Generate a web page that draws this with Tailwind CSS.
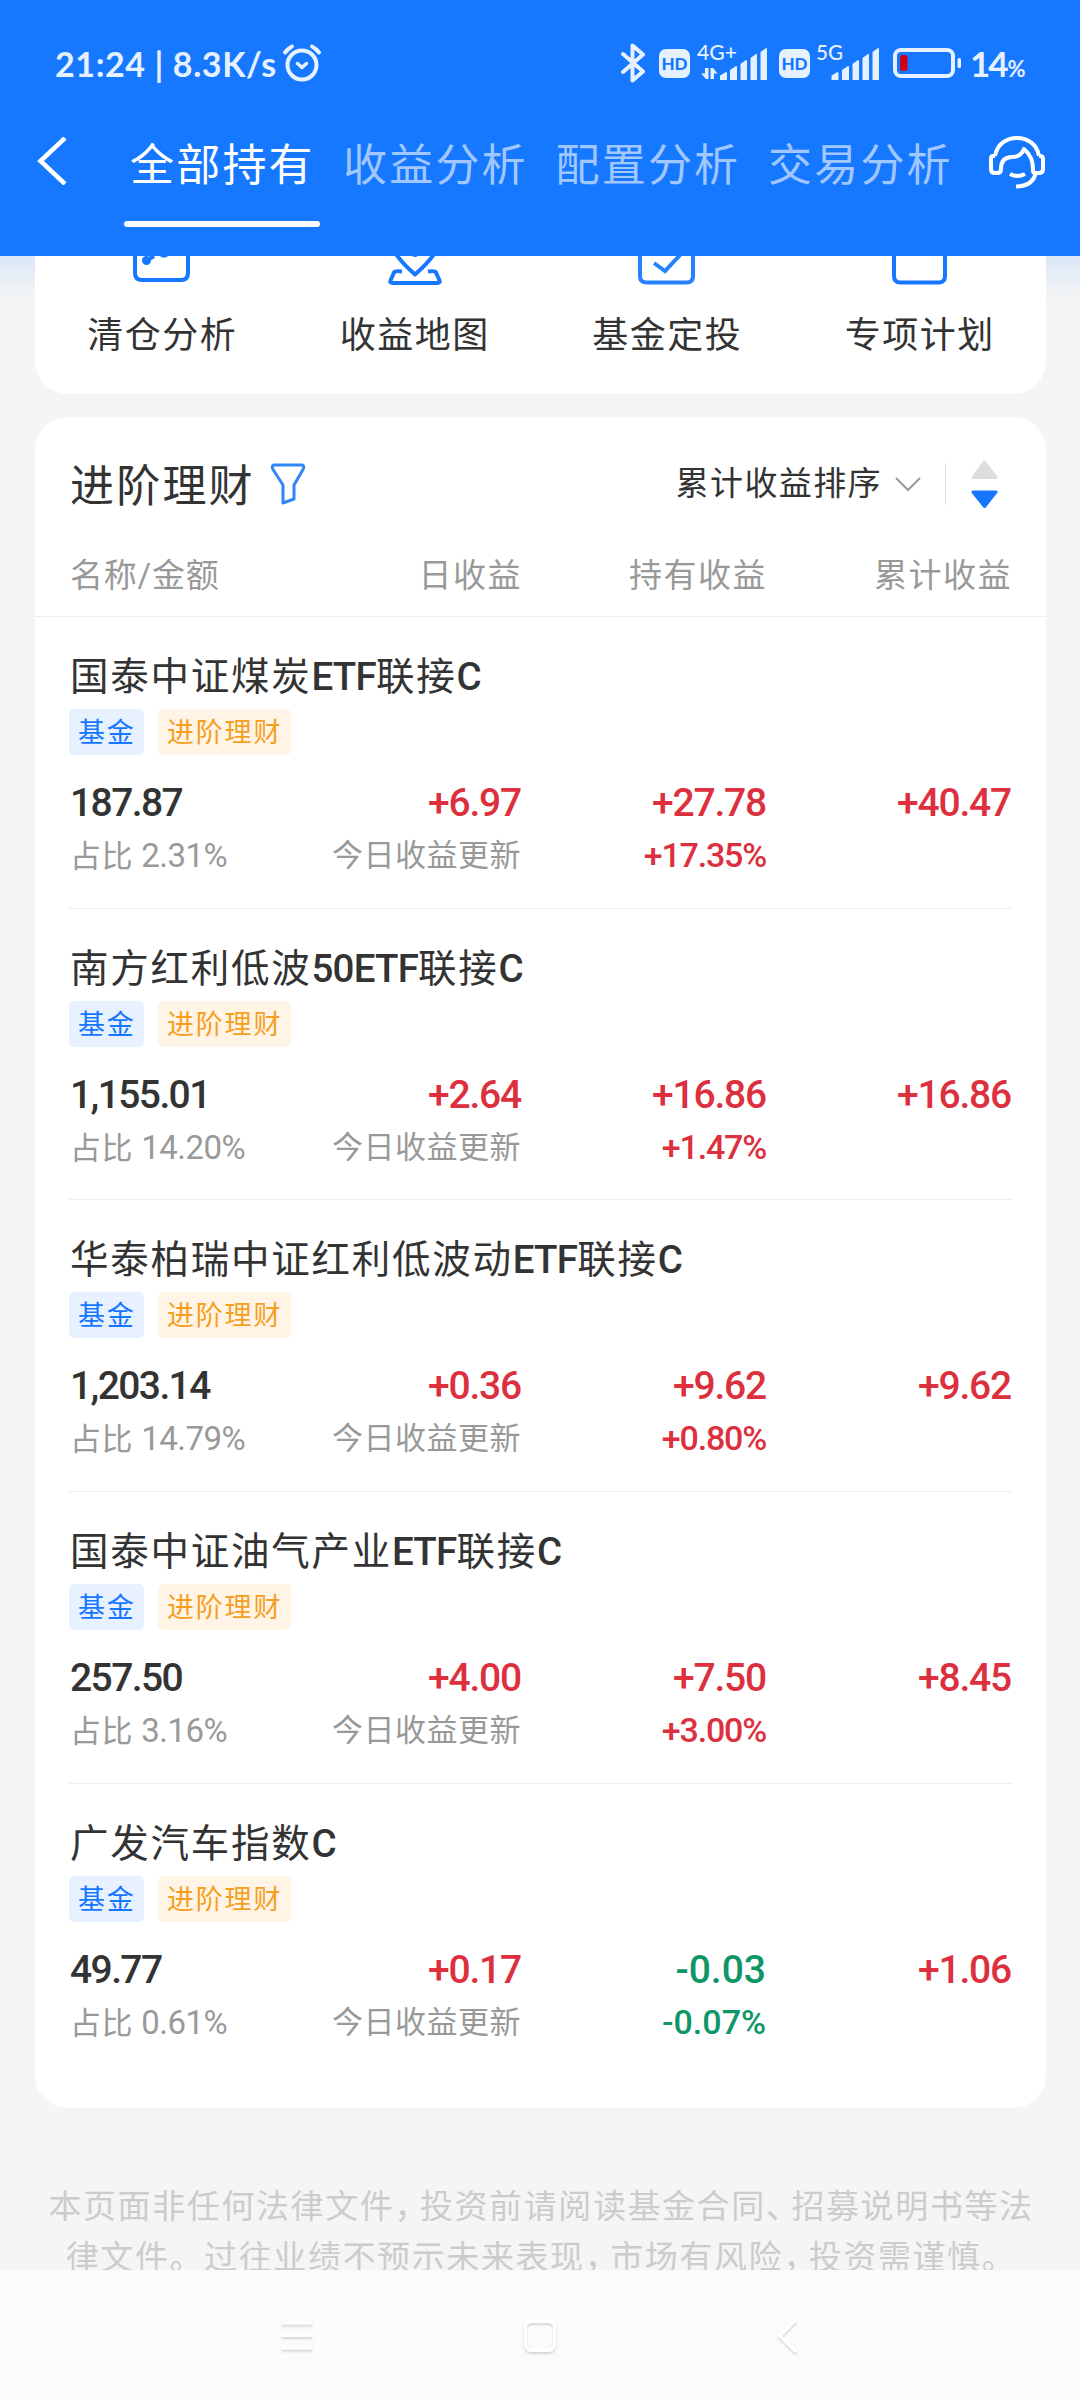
<!doctype html>
<html lang="zh-CN">
  <head>
    <meta charset="UTF-8" />
    <meta name="viewport" content="width=device-width, initial-scale=1.0" />
    <title>全部持有</title>
    <script src="https://cdn.jsdelivr.net/npm/@tailwindcss/browser@4"></script>
  </head>
  <body
    class="flex h-[2400px] w-[1080px] flex-col overflow-hidden bg-[#f5f5f5] font-['Roboto','Noto_Sans_CJK_SC',sans-serif] text-[#333]"
  >
    <header class="h-[256px] shrink-0 bg-[#1677ff] text-white">
      <!-- status bar -->
      <div class="flex h-[126px] items-center pl-[55px] text-[#e6f1ff]">
        <span
          class="w-[226px] whitespace-pre font-['Lato'] text-[34px] font-bold tracking-[0.6px]"
          >21:24 | 8.3K/s</span
        >
        <svg class="h-[40px] w-[42px]" viewBox="0 0 42 40" fill="none" stroke="currentColor" stroke-width="4" stroke-linecap="round">
          <circle cx="21" cy="22" r="14.5" />
          <path d="M4 9.5 Q7 5.5 11 3.5M38 9.5 Q35 5.5 31 3.5" />
          <path d="M16.5 20.5l4.5 4 4.500-4" stroke-width="3.500" stroke-linejoin="round" />
        </svg>
        <svg class="ml-[297px] h-[40px] w-[26px]" viewBox="0 0 26 40" fill="none" stroke="currentColor" stroke-width="4" stroke-linecap="round" stroke-linejoin="round">
          <path d="M3 11l20 17.500-10.500 9V2.500l10.500 9L3 29" />
        </svg>
        <span
          class="ml-[13px] flex h-[29px] w-[31px] items-center justify-center rounded-[7px] bg-[#e6f1ff] font-['Lato'] text-[17px] font-black leading-none text-[#1677ff]"
          >HD</span
        >
        <svg class="ml-[7px] h-[40px] w-[72px] overflow-visible" viewBox="0 0 72 40" fill="currentColor">
          <text x="0" y="17" font-family="Lato" font-size="21" font-weight="500" textLength="40" lengthAdjust="spacingAndGlyphs">4G+</text>
          <path d="M8 25h3.500v11H9l-5-5.500h4zM13.500 25h2.500l4.500 5.500H17V36h-3.500z" />
          <path d="M23 32.500l6-3.500q1 0 1 1v7H23zM33 27l6-4q1 0 1 1v13H33zM43.500 21l5.500-4q1 0 1 1v19H43.500zM53.500 15l5.500-4q1 0 1 1v25H53.500zM63.500 9l5.500-4q1 0 1 1v31H63.500z" />
        </svg>
        <span
          class="ml-[10px] flex h-[29px] w-[31px] items-center justify-center rounded-[7px] bg-[#e6f1ff] font-['Lato'] text-[17px] font-black leading-none text-[#1677ff]"
          >HD</span
        >
        <svg class="ml-[6px] h-[40px] w-[65px] overflow-visible" viewBox="0 0 65 40" fill="currentColor">
          <text x="0" y="17" font-family="Lato" font-size="21" font-weight="500" textLength="27" lengthAdjust="spacingAndGlyphs">5G</text>
          <path d="M15.500 32.500l6-3.500q1 0 1 1v7H15.500zM26 27l6-4q1 0 1 1v13H26zM36.500 21l5.500-4q1 0 1 1v19H36.500zM46.500 15l5.500-4q1 0 1 1v25H46.500zM56.500 9l5.500-4q1 0 1 1v31H56.500z" />
        </svg>
        <svg class="ml-[12px] h-[30px] w-[69px]" viewBox="0 0 69 30">
          <rect x="2" y="2" width="58" height="26" rx="6" fill="none" stroke="currentColor" stroke-width="4" />
          <rect x="64.500" y="10" width="3.500" height="10" rx="1.500" fill="currentColor" />
          <rect x="7" y="7" width="7.500" height="16" rx="2.500" fill="#d0021b" />
        </svg>
        <span class="ml-[8px] font-['Lato'] text-[35px] font-bold tracking-[-2px]"
          >14<span class="ml-[1px] text-[22px]">%</span></span
        >
      </div>

      <nav class="flex h-[130px] items-start">
        <svg class="ml-[37px] mt-[11px] h-[48px] w-[30px]" viewBox="0 0 30 48" fill="none" stroke="currentColor" stroke-width="4.500">
          <path d="M28 1L3.500 24 28 47" />
        </svg>
        <ul class="ml-[57px] flex text-[44px] leading-[80px] tracking-[2.2px] text-white/60">
          <li class="flex w-[196px] flex-col text-white">
            <span class="pl-[6px]">全部持有</span>
            <span class="mt-[15px] h-[6px] rounded-full bg-white"></span>
          </li>
          <li class="ml-[23px] w-[212.500px]">收益分析</li>
          <li class="w-[212.500px]">配置分析</li>
          <li class="w-[212.500px]">交易分析</li>
        </ul>
        <svg class="ml-[7px] mt-[9px] h-[54px] w-[58px] shrink-0" viewBox="0 0 58 54" fill="none" stroke="currentColor" stroke-width="4" stroke-linejoin="round">
          <path d="M7 21C9 9.500 18 3 29 3s20 6.500 22 18" />
          <path d="M7 21H5q-2 0-2 3v10q0 4 4 4h2q4 0 4-4C13 26 17 22 24 22c6 0 10-3 12-8 7 6 9 12 9 22q0 2 3 2h3q4 0 4-4V24q0-3-3-3h-1" />
          <path d="M48 37C46 47 39 51.500 28 51.500M22 39q7 4 15 0" />
        </svg>
      </nav>
    </header>

    <main class="h-[2014px] shrink-0 overflow-hidden">
      <div class="bg-linear-to-b from-[#dbe7f7] to-[#f5f5f5] to-[44px] px-[35px]">
        <section class="grid h-[138px] w-[1011px] grid-cols-4 rounded-b-[33px] bg-white pl-px text-center text-[36px] leading-[50px] tracking-[1.500px]">
          <div>
            <svg class="mx-auto mb-[25px] h-[30px] w-[60px]" viewBox="0 0 60 30" fill="none" stroke="#1677ff" stroke-width="4">
              <path d="M3 0v17q0 7 7 7h39q7 0 7-7V0" />
              <path d="M14 5L22 0M29 -1.500q3 2.500 6 0" />
              <circle cx="14.500" cy="4.500" r="4.500" fill="#1677ff" stroke="none" />
            </svg>
            清仓分析
          </div>
          <div>
            <svg class="mx-auto mb-[25px] h-[30px] w-[60px]" viewBox="0 0 60 30" fill="none" stroke="#1677ff" stroke-width="4" stroke-linejoin="round">
              <path d="M11 -2Q16 6 30 18.500 44 6 49 -2" />
              <path d="M17 15.500q-7-1-8 1l-3.500 8q-1 2.500 2 2.500h45q3 0 2-2.500l-3.500-8q-1-2-8-1" />
              <circle cx="30" cy="-4" r="5" fill="#1677ff" stroke="none" />
            </svg>
            收益地图
          </div>
          <div>
            <svg class="mx-auto mb-[25px] h-[30px] w-[60px]" viewBox="0 0 60 30" fill="none" stroke="#2681fa" stroke-width="4">
              <path d="M3 0v20q0 6.500 6.500 6.500h40q6.500 0 6.500-6.500V0" />
              <path d="M17 7L28 15 44 -2" />
            </svg>
            基金定投
          </div>
          <div>
            <svg class="mx-auto mb-[25px] h-[30px] w-[60px]" viewBox="0 0 60 30" fill="none" stroke="#1677ff" stroke-width="4">
              <path d="M4 0v20q0 6.500 6.500 6.500h38q6.500 0 6.500-6.500V0" />
            </svg>
            专项计划
          </div>
        </section>
      </div>

      <section class="mx-[35px] mt-[23px] h-[1691px] w-[1011px] rounded-[33px] bg-white">
        <div class="flex h-[134px] items-center pl-[35px] pr-[48px]">
          <h2 class="pt-[5px] text-[44px] leading-[60px] tracking-[2.200px]">进阶理财</h2>
          <svg class="ml-[15px] h-[42px] w-[36px]" viewBox="0 0 36 42" fill="none" stroke="#3385f7" stroke-width="3" stroke-linejoin="round">
            <path d="M4 2h28q3 1 1 4.500L24 22v14l-11 4V22L3 6.500Q1 3 4 2z" />
          </svg>
          <span class="ml-auto text-[33px] tracking-[1.400px]">累计收益排序</span>
          <svg class="ml-[13px] mr-px h-[15px] w-[26px]" viewBox="0 0 26 15" fill="none" stroke="#999" stroke-width="2">
            <path d="M1 1l12 12L25 1" />
          </svg>
          <span class="ml-[23px] h-[42px] w-px bg-[#ddd]"></span>
          <svg class="ml-[25px] h-[48px] w-[27px]" viewBox="0 0 27 48" stroke-width="3" stroke-linejoin="round">
            <path d="M13.500 2L25 17.500H2z" fill="#ddd" stroke="#ddd" />
            <path d="M13.500 46.500L25 32H2z" fill="#1677ff" stroke="#1677ff" />
          </svg>
        </div>
        <div class="grid h-[66px] grid-cols-[217px_235px_245px_245px] border-b border-[#eee] pl-[35px] pt-[5px] text-right text-[33px] leading-[40px] tracking-[1.500px] text-[#999]">
          <span class="text-left tracking-[0.800px]">名称/金额</span>
          <span>日收益</span>
          <span>持有收益</span>
          <span>累计收益</span>
        </div>
        <ul id="funds"></ul>
      </section>

      <footer class="mt-[73px] pl-[2px] text-center text-[33px] leading-[51px] tracking-[1.600px] text-[#ccc]">
        <p class="whitespace-nowrap">
          本页面非任何法律文件<span class="tracking-[-7.500px]">，</span>投资前请阅读基金合同<span class="tracking-[-7.500px]">、</span>招募说明书等法
        </p>
        <p class="whitespace-nowrap">
          律文件。过往业绩不预示未来表现<span class="tracking-[-7.500px]">，</span>市场有风险<span class="tracking-[-7.500px]">，</span>投资需谨慎。
        </p>
      </footer>
    </main>

    <!-- system navigation -->
    <div class="flex h-[130px] shrink-0 items-start bg-[#fafbfd] pt-[46px]">
      <svg class="ml-[277px] h-[44px] w-[40px] drop-shadow-[0_2px_1px_rgba(0,0,0,0.15)]" viewBox="0 0 40 44" stroke="#fff" stroke-width="3">
        <path d="M5 7h30M5 19.500h30M5 32h30" />
      </svg>
      <svg class="ml-[203px] h-[44px] w-[40px] drop-shadow-[0_2px_1px_rgba(0,0,0,0.15)]" viewBox="0 0 40 44" fill="none" stroke="#fff" stroke-width="3">
        <rect x="5.500" y="5.500" width="29" height="29" rx="6" />
      </svg>
      <svg class="ml-[213px] h-[44px] w-[30px] drop-shadow-[0_2px_1px_rgba(0,0,0,0.15)]" viewBox="0 0 30 44" fill="none" stroke="#fff" stroke-width="3">
        <path d="M23 4L7 20l16 16" />
      </svg>
    </div>

    <script type="module">
      const funds = [
        ["国泰中证煤炭ETF联接C", "187.87", "2.31%", "+6.97", "+27.78", "+17.35%", "+40.47"],
        ["南方红利低波50ETF联接C", "1,155.01", "14.20%", "+2.64", "+16.86", "+1.47%", "+16.86"],
        ["华泰柏瑞中证红利低波动ETF联接C", "1,203.14", "14.79%", "+0.36", "+9.62", "+0.80%", "+9.62"],
        ["国泰中证油气产业ETF联接C", "257.50", "3.16%", "+4.00", "+7.50", "+3.00%", "+8.45"],
        ["广发汽车指数C", "49.77", "0.61%", "+0.17", "-0.03", "-0.07%", "+1.06"],
      ];
      const color = (v) =>
        v.startsWith("-") ? "text-[#0f9668] tracking-[0px]" : "text-[#dc303e] tracking-[-1.200px]";
      // latin runs in a fund name are heavier and tighter than the hanzi
      const title = (s) =>
        s.replace(/[A-Z0-9]+/g, '<b class="font-medium tracking-[-0.800px]">$&</b>');
      const Row = ([name, amount, share, day, held, rate, total]) => `
        <li class="mx-[34px] h-[291.670px] border-b border-[#eee] pt-[32px] last:border-0">
          <h3 class="pl-[1px] text-[38.500px] leading-[56px] tracking-[1.750px]">${title(name)}</h3>
          <div class="mt-[4px] flex gap-[14px] text-[27px] leading-[49px] tracking-[1.800px]">
            <span class="h-[46px] w-[75px] rounded-[5px] bg-[#e7f1ff] pl-[9px] text-[#1677ff]">基金</span>
            <span class="h-[46px] w-[133px] rounded-[5px] bg-[#fff4e5] pl-[9px] text-[#f5a01f]">进阶理财</span>
          </div>
          <div class="mt-[20px] grid grid-cols-[217px_235px_245px_245px] text-right text-[39px] font-medium leading-[56px]">
            <span class="pl-[1px] text-left tracking-[-1.600px]">${amount}</span>
            <span class="${color(day)}">${day}</span>
            <span class="${color(held)}">${held}</span>
            <span class="${color(total)}">${total}</span>
          </div>
          <div class="mt-[4px] grid grid-cols-[217px_235px_245px] text-right text-[31px] leading-[41px] tracking-[0.500px] text-[#999]">
            <span class="whitespace-nowrap pl-[1px] text-left">占比 <span class="text-[33px] tracking-[-0.500px]">${share}</span></span>
            <span>今日收益更新</span>
            <span class="text-[34px] font-medium ${color(rate)}">${rate}</span>
          </div>
        </li>`;
      document.getElementById("funds").innerHTML = funds.map(Row).join("");
    </script>
  </body>
</html>
